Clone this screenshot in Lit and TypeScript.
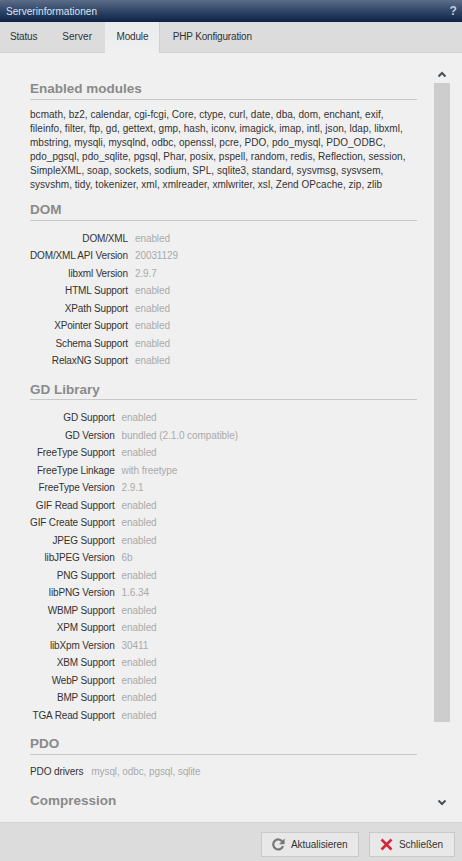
import { LitElement, html, css } from "lit";
import { customElement } from "lit/decorators.js";

type Row = [string, string];
const dom: Row[] = [
  ["DOM/XML", "enabled"], ["DOM/XML API Version", "20031129"], ["libxml Version", "2.9.7"],
  ["HTML Support", "enabled"], ["XPath Support", "enabled"], ["XPointer Support", "enabled"],
  ["Schema Support", "enabled"], ["RelaxNG Support", "enabled"],
];
const gd: Row[] = [
  ["GD Support", "enabled"], ["GD Version", "bundled (2.1.0 compatible)"], ["FreeType Support", "enabled"],
  ["FreeType Linkage", "with freetype"], ["FreeType Version", "2.9.1"], ["GIF Read Support", "enabled"],
  ["GIF Create Support", "enabled"], ["JPEG Support", "enabled"], ["libJPEG Version", "6b"],
  ["PNG Support", "enabled"], ["libPNG Version", "1.6.34"], ["WBMP Support", "enabled"],
  ["XPM Support", "enabled"], ["libXpm Version", "30411"], ["XBM Support", "enabled"],
  ["WebP Support", "enabled"], ["BMP Support", "enabled"], ["TGA Read Support", "enabled"],
];
const modules = "bcmath, bz2, calendar, cgi-fcgi, Core, ctype, curl, date, dba, dom, enchant, exif, fileinfo, filter, ftp, gd, gettext, gmp, hash, iconv, imagick, imap, intl, json, ldap, libxml, mbstring, mysqli, mysqlnd, odbc, openssl, pcre, PDO, pdo_mysql, PDO_ODBC, pdo_pgsql, pdo_sqlite, pgsql, Phar, posix, pspell, random, redis, Reflection, session, SimpleXML, soap, sockets, sodium, SPL, sqlite3, standard, sysvmsg, sysvsem, sysvshm, tidy, tokenizer, xml, xmlreader, xmlwriter, xsl, Zend OPcache, zip, zlib";

@customElement("app-root")
export class AppRoot extends LitElement {
  static styles = css`
    :host { display: flex; flex-direction: column; width: 462px; height: 861px; overflow: hidden;
      font-family: "Liberation Sans", Arial, sans-serif; font-size: 10px; color: #333; background: #f0f0f0; }
    .title { height: 22px; flex: none; display: flex; align-items: center; justify-content: space-between;
      padding: 0 5px 0 6px; color: #dde3ec; font-size: 10px; letter-spacing: .05px;
      background: linear-gradient(#5d6d88, #33496c 45%, #0e2344); box-sizing: border-box; }
    .help { font-size: 12px; font-weight: bold; color: #c5ccd8; }
    .tabs { height: 31px; flex: none; box-sizing: border-box; display: flex; background: linear-gradient(#d7dde6 0, #dcdcdc 2px);
      border-bottom: 1px solid #d2d2d2; letter-spacing: -.18px; }
    .tab { padding: 0 12.5px; line-height: 29px; color: #333; }
    .tab:first-child { padding-left: 10px; }
    .tab:nth-child(2) { letter-spacing: .05px; }
    .tab.active { background: linear-gradient(#e9ebee, #f0f0f0); border-right: 1px solid #cfcfcf; height: 31px;
      padding: 0 11px 0 12px; box-sizing: border-box; }
    .body { flex: 1; min-height: 0; display: flex; overflow: hidden; }
    .main { width: 387px; margin-left: 30px; padding-top: 26px; flex: none; overflow: hidden; }
    h2 { margin: 0; font-size: 13.5px; line-height: 19px; height: 18px; font-weight: bold; color: #8a8a8a;
      border-bottom: 1px solid #c8c8c8; padding-bottom: 1.5px; }
    h2.plain { border-bottom: 0; }
    .mods { width: 385px; margin: 8.5px 0 8px; line-height: 14px; color: #333; letter-spacing: .035px; }
    table { border-collapse: collapse; margin: 9px 0 10px; }
    td { padding: 0; height: 17.5px; line-height: 17.5px; white-space: nowrap; }
    td.k { text-align: right; color: #333; padding-right: 7px; letter-spacing: -.15px; }
    td.v { color: #aaa; letter-spacing: -.08px; }
    .pdo { display: flex; gap: 8px; height: 17px; line-height: 17px; margin: 8px 0 11.5px; letter-spacing: -.1px; }
    .pdo span:last-child { color: #aaa; }
    .bar { width: 16px; margin-left: 17px; flex: none; display: flex; flex-direction: column; align-items: center; padding-top: 18.25px; }
    .bar svg { flex: none; display: block; }
    .thumb { width: 16px; height: 639px; background: #cdcdcd; margin: 4.75px 0 76.5px; }
    .foot { height: 39px; flex: none; box-sizing: border-box; background: #dcdcdc; border-top: 1px solid #d6d6d6;
      display: flex; justify-content: flex-end; gap: 10px; padding: 9px 7px 0 0; }
    .btn { height: 25px; box-sizing: border-box; display: flex; align-items: center; gap: 6px; background: #e8e8e8;
      border: 1px solid #c9c9c9; color: #333; letter-spacing: -.05px; }
    .b1 { width: 98px; padding-left: 10px; }
    .b2 { width: 86px; padding-left: 10px; }
    .btn svg { flex: none; }
  `;

  private table(rows: Row[]) {
    return html`<table>${rows.map(([k, v]) => html`<tr><td class="k">${k}</td><td class="v">${v}</td></tr>`)}</table>`;
  }

  render() {
    return html`
      <div class="title"><span>Serverinformationen</span><span class="help">?</span></div>
      <div class="tabs">
        <div class="tab">Status</div><div class="tab">Server</div>
        <div class="tab active">Module</div><div class="tab">PHP Konfiguration</div>
      </div>
      <div class="body">
        <div class="main">
          <h2>Enabled modules</h2>
          <div class="mods">${modules}</div>
          <h2>DOM</h2>
          ${this.table(dom)}
          <h2>GD Library</h2>
          ${this.table(gd)}
          <h2>PDO</h2>
          <div class="pdo"><span>PDO drivers</span><span>mysql, odbc, pgsql, sqlite</span></div>
          <h2 class="plain">Compression</h2>
        </div>
        <div class="bar">
          <svg width="10" height="7" viewBox="0 0 10 7"><path d="M1.5 5.5 5 2l3.5 3.5" fill="none" stroke="#4a4f57" stroke-width="2"/></svg>
          <div class="thumb"></div>
          <svg width="10" height="7" viewBox="0 0 10 7"><path d="M1.5 1.5 5 5l3.5-3.5" fill="none" stroke="#4a4f57" stroke-width="2"/></svg>
        </div>
      </div>
      <div class="foot">
        <div class="btn b1">
          <svg width="13" height="13" viewBox="0 0 13 13"><path d="M10.6 4A5 5 0 1 0 11 8" fill="none" stroke="#777" stroke-width="2.2"/><path d="M12.6 .6v5.6H7z" fill="#777"/></svg>
          <span>Aktualisieren</span>
        </div>
        <div class="btn b2">
          <svg width="13" height="13" viewBox="0 0 13 13"><path d="M1.5 1.5l10 10M11.5 1.5l-10 10" stroke="#d2283c" stroke-width="2.6"/></svg>
          <span>Schließen</span>
        </div>
      </div>
    `;
  }
}
